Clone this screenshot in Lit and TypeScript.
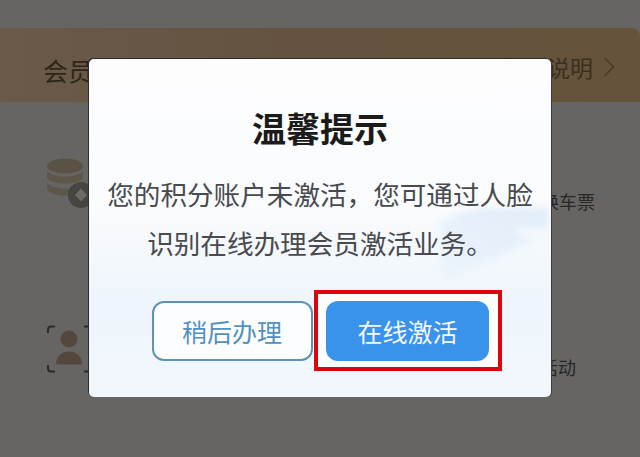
import { LitElement, html, css } from "lit";
import { customElement } from "lit/decorators.js";

@customElement("app-root")
export class AppRoot extends LitElement {
  static styles = css`
    :host { display: block; width: 640px; height: 457px; }
    * { box-sizing: border-box; }
    .page {
      position: relative; width: 640px; height: 457px; overflow: hidden;
      background: #666564; padding-top: 28px;
      font-family: "Liberation Sans", "Noto Sans CJK SC", sans-serif;
    }
    .banner {
      height: 74px; padding: 0 25px 0 43px; display: flex; align-items: center; justify-content: space-between;
      background: linear-gradient(90deg, #6a5a4a, #64523f 50%, #66533b);
      border-top-right-radius: 8px; color: #2e2519; font-size: 25px;
    }
    .banner > span:first-child { padding-top: 9px; }
    .banner .more { display: flex; align-items: center; gap: 10px; font-size: 23px; color: #3a2e20; padding-top: 4px; }
    .rows { display: flex; flex-direction: column; }
    .row { display: flex; justify-content: space-between; align-items: flex-end; padding-left: 47px; font-size: 18px; color: #282726; }
    .row span { margin-bottom: -6px; }
    .r1 { margin-top: 56px; padding-right: 45px; }
    .r2 { margin-top: 116px; padding-right: 64px; }
    svg { display: block; }
    .modal {
      position: absolute; left: 89px; top: 59px; width: 462px; height: 338px;
      border-radius: 5px; overflow: hidden; padding-top: 50px;
      background: linear-gradient(180deg, #fdfdfe 0%, #f9fbfd 45%, #eef5fc 72%, #f2f7fd 100%);
      box-shadow: -1px -1px 0 #2c2c2c, 1px 0 0 #3c3c3c;
      display: flex; flex-direction: column; align-items: center;
    }
    .cloud { position: absolute; right: 3px; top: 149px; filter: blur(3px); }
    h1 {
      position: relative; margin: 0; font-size: 34px; line-height: 42px; font-weight: 700; color: #1b1b1b;
    }
    p {
      position: relative; margin: 21px 0 0; width: 430px; text-align: center;
      font-size: 26.6px; line-height: 49px; color: #484a4d; font-weight: 400;
    }
    .actions { position: relative; display: flex; align-items: center; margin-top: 20px; gap: 1px; margin-left: 13px; }
    .btn {
      width: 161px; height: 60px; border-radius: 12px; display: flex; align-items: center; justify-content: center;
      font-size: 25px;
    }
    .later { border: 2px solid #5d94b4; color: #5490bd; background: #fbfdfe; }
    .mark { border: 4.5px solid #df0409; padding: 6.5px 8.5px; background: #fbfdff; }
    .go { width: 163px; background: #3a93ea; color: #f4f9fe; }
  `;

  render() {
    return html`
      <div class="page">
        <div class="banner">
          <span>会员积分</span>
          <span class="more">积分规则说明
            <svg width="12" height="22" viewBox="0 0 12 22" fill="none" stroke="#4a3b29" stroke-width="1.6"><path d="M1.5 2 L10.5 11 L1.5 20"/></svg>
          </span>
        </div>
        <div class="rows">
          <div class="row r1">
            <svg width="50" height="50" viewBox="0 0 50 50">
              <ellipse cx="18" cy="8" rx="18" ry="7.500" fill="#5a5244"/>
              <path d="M0 13c4 4 10 5.500 18 5.500S32 17 36 13v7c-4 4-10 5.500-18 5.500S4 24 0 20z" fill="#5e5648"/>
              <path d="M0 25c4 4 10 5.500 18 5.500 3 0 5-.2 7-.6-1 2-2 5-2 7-2 .4-3 .6-5 .6-8 0-14-2-18-5.500z" fill="#5e5648"/>
              <circle cx="34" cy="37" r="13" fill="#474540"/>
              <path d="M34 30.500l6 6.500-6 6.500-6-6.500z" fill="#6d6a65"/>
            </svg>
            <span>积分兑换车票</span>
          </div>
          <div class="row r2">
            <svg width="48" height="50" viewBox="0 0 48 50" fill="none">
              <path d="M8 2.500H4Q1 2.500 1 6V9M8 47.500H4Q1 47.500 1 44V41M37 2.500H41M37 47.500H41" stroke="#2b2a29" stroke-width="2"/>
              <circle cx="22" cy="15" r="8.500" fill="#54483e"/>
              <path d="M9 40.500c0-9 6-13 13-13s13 4 13 13z" fill="#54483e"/>
            </svg>
            <span>参与积分活动</span>
          </div>
        </div>
        <div class="modal">
          <svg class="cloud" width="108" height="72" viewBox="0 0 108 72">
            <defs>
              <linearGradient id="cl" x1="1" y1="0" x2="0" y2="1">
                <stop offset="0" stop-color="#e1edf9"/>
                <stop offset="1" stop-color="#ecf4fb"/>
              </linearGradient>
            </defs>
            <path d="M0 15 Q18 2 40 0 H104 Q108 0 108 5 V25 L60 48 L5 72 Q-3 40 0 15Z" fill="url(#cl)"/>
            <path d="M76 20 H108 V30 H78Z" fill="#f3f7fb"/>
          </svg>
          <h1>温馨提示</h1>
          <p>您的积分账户未激活，您可通过人脸识别在线办理会员激活业务。</p>
          <div class="actions">
            <div class="btn later">稍后办理</div>
            <div class="mark"><div class="btn go">在线激活</div></div>
          </div>
        </div>
      </div>
    `;
  }
}
